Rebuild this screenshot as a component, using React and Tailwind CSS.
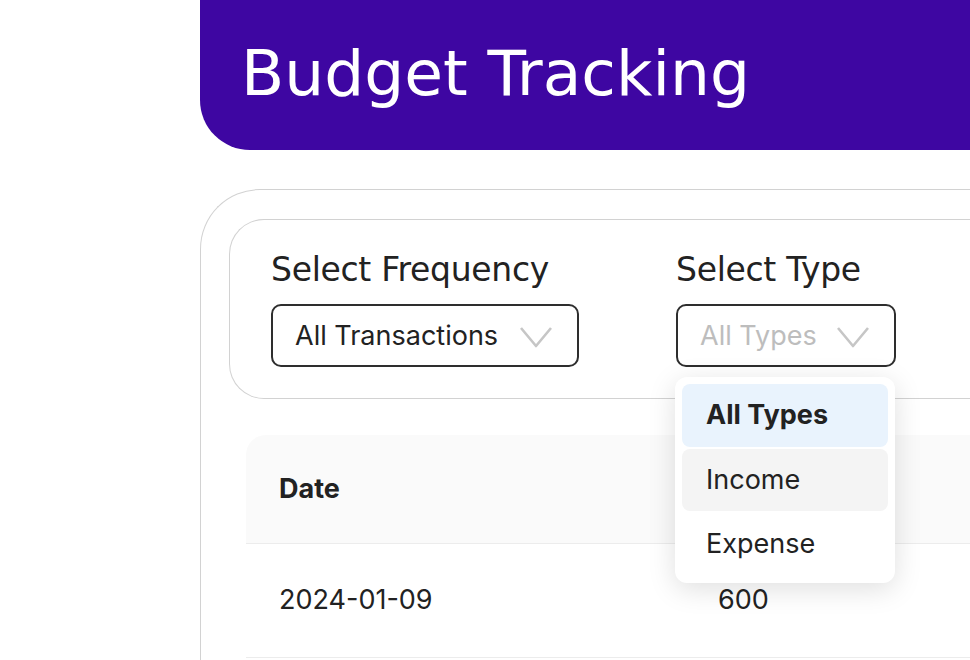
import React from "react";

const Chevron = () => (
  <svg width="34" height="22" viewBox="0 0 34 22" fill="none" className="shrink-0">
    <path d="M2 2 L17 20 L32 2" stroke="#c6c6c6" strokeWidth="2.6" strokeLinejoin="round" />
  </svg>
);

const heading = { fontFamily: '"DejaVu Sans", "Open Sans", sans-serif' };

export default function App() {
  return (
    <div
      className="relative flex w-full h-[660px] overflow-hidden bg-white text-[#222]"
      style={{ fontFamily: 'Inter, "Noto Sans", sans-serif' }}
    >
      <div className="w-[200px] shrink-0" />
      <div className="flex-1 flex flex-col">
        {/* Header */}
        <div className="h-[150px] shrink-0 bg-[#3e06a2] rounded-bl-[50px] pl-[41px] flex items-center pb-[4px]">
          <h1 className="text-white text-[63px] leading-none" style={heading}>
            Budget Tracking
          </h1>
        </div>

        {/* Outer card */}
        <div className="mt-[39px] flex-1 border-t border-l border-[#d2d2d2] rounded-tl-[60px] pt-[29px] pl-[28px]">
          {/* Filters */}
          <div className="h-[180px] border-t border-l border-b border-[#d2d2d2] rounded-l-[35px] pl-[41px] pt-[30px] flex">
            <div className="w-[405px] flex flex-col">
              <div className="text-[33px] leading-[40px] text-[#222] tracking-[-0.3px]" style={heading}>
                Select Frequency
              </div>
              <div className="mt-[14px] w-[308px] h-[63px] border-2 border-[#2e2e2e] rounded-[10px] flex items-center justify-between pl-[22px] pr-[24px] pt-[2px]">
                <span className="text-[27px]">All Transactions</span>
                <Chevron />
              </div>
            </div>
            <div className="flex flex-col">
              <div className="text-[33px] leading-[40px] text-[#222] tracking-[-0.3px]" style={heading}>
                Select Type
              </div>
              <div className="mt-[14px] w-[220px] h-[63px] border-2 border-[#2e2e2e] rounded-[10px] flex items-center justify-between pl-[22px] pr-[24px] pt-[2px]">
                <span className="text-[27px] text-[#bdbdbd]">All Types</span>
                <Chevron />
              </div>
            </div>
          </div>

          {/* Table */}
          <div className="ml-[17px] mt-[36px]">
            <div className="h-[109px] bg-[#fafafa] rounded-tl-[20px] border-b border-[#ececec] flex items-center pl-[33px]">
              <div className="w-[439px] text-[27px] font-bold">Date</div>
            </div>
            <div className="h-[114px] border-b border-[#ececec] flex items-center pl-[33px]">
              <div className="w-[439px] text-[27px]">2024-01-09</div>
              <div className="text-[27px]">600</div>
            </div>
          </div>
        </div>
      </div>

      {/* Dropdown menu */}
      <div className="absolute left-[675px] top-[377px] w-[220px] bg-white rounded-[12px] shadow-[0_6px_28px_rgba(0,0,0,0.13)] p-[7px] pb-[8px] flex flex-col gap-[2px]">
        <div className="h-[63px] rounded-[8px] bg-[#e9f3fd] flex items-center pl-[24px] text-[27px] font-bold">
          All Types
        </div>
        <div className="h-[62px] rounded-[8px] bg-[#f4f4f4] flex items-center pl-[24px] text-[27px]">
          Income
        </div>
        <div className="h-[62px] rounded-[8px] flex items-center pl-[24px] text-[27px]">
          Expense
        </div>
      </div>
    </div>
  );
}
